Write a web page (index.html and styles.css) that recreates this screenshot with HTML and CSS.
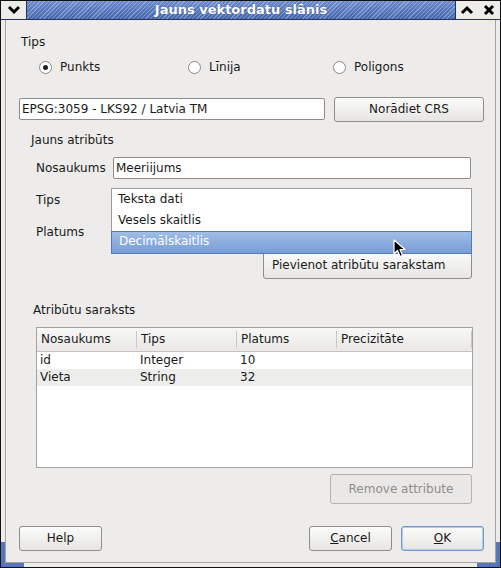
FILE: index.html
```html
<!DOCTYPE html>
<html lang="lv">
<head>
    <meta charset="UTF-8">
    <title>Jauns vektordatu slānis</title>
    <link rel="stylesheet" href="styles.css">
</head>
<body>
    <div class="window">
        <div class="titlebar">
            <div class="tb-btn tb-menu">
                <svg width="14" height="10" viewBox="0 0 14 10"><path d="M2 2 L7 7 L12 2" fill="none" stroke="#000" stroke-width="3"/></svg>
            </div>
            <div class="tb-title">Jauns vektordatu slānis</div>
            <div class="tb-btn tb-max">
                <svg width="14" height="10" viewBox="0 0 14 10"><path d="M2 8 L7 3 L12 8" fill="none" stroke="#000" stroke-width="3"/></svg>
            </div>
            <div class="tb-btn tb-close">
                <svg width="12" height="12" viewBox="0 0 12 12"><path d="M2 2 L10 10 M10 2 L2 10" fill="none" stroke="#000" stroke-width="3"/></svg>
            </div>
        </div>

        <div class="client">
            <div class="group-title">Tips</div>
            <div class="radio-row">
                <label class="radio"><span class="dot checked"></span>Punkts</label>
                <label class="radio"><span class="dot"></span>Līnija</label>
                <label class="radio"><span class="dot"></span>Poligons</label>
            </div>

            <div class="crs-row">
                <div class="field crs-field">EPSG:3059 - LKS92 / Latvia TM</div>
                <div class="button crs-btn">Norādiet CRS</div>
            </div>

            <div class="group-title attr-title">Jauns atribūts</div>
            <div class="form-row">
                <span class="form-label">Nosaukums</span>
                <div class="field name-field">Meeriijums</div>
            </div>
            <div class="form-row plain">
                <span class="form-label">Tips</span>
            </div>
            <div class="form-row plain">
                <span class="form-label">Platums</span>
            </div>
            <div class="add-row">
                <div class="button add-btn">Pievienot atribūtu sarakstam</div>
            </div>

            <!-- open combo box list -->
            <ul class="popup">
                <li>Teksta dati</li>
                <li>Vesels skaitlis</li>
                <li class="selected">Decimālskaitlis</li>
            </ul>
            <svg class="cursor" width="14" height="20" viewBox="0 0 14 20">
                <path d="M1 1 L1 15 L4.5 11.5 L7 17.5 L9.5 16.5 L7 10.5 L12 10.5 Z" fill="#000" stroke="#fff" stroke-width="1.2" stroke-linejoin="round"/>
            </svg>

            <div class="group-title list-title">Atribūtu saraksts</div>
            <div class="table">
                <div class="thead">
                    <span>Nosaukums</span>
                    <span>Tips</span>
                    <span>Platums</span>
                    <span>Precizitāte</span>
                </div>
                <div class="trow">
                    <span>id</span><span>Integer</span><span>10</span><span></span>
                </div>
                <div class="trow alt">
                    <span>Vieta</span><span>String</span><span>32</span><span></span>
                </div>
            </div>

            <div class="remove-row">
                <div class="button disabled remove-btn">Remove attribute</div>
            </div>

            <div class="footer">
                <div class="button">Help</div>
                <div class="spacer"></div>
                <div class="button"><u>C</u>ancel</div>
                <div class="button default"><u>O</u>K</div>
            </div>
        </div>
    </div>
</body>
</html>
```

FILE: styles.css
```css
body {
    margin: 0;
    font-family: "DejaVu Sans", sans-serif;
    font-size: 12px;
    color: #1a1a1a;
    background: #edeceb;
}
.window {
    width: 501px;
    height: 568px;
    box-sizing: border-box;
    border: 1px solid #111;
    background: #edeceb;
    position: relative;
    display: flex;
    flex-direction: column;
}
/* resize grips in the lower corners */
.window::before, .window::after {
    content: "";
    position: absolute;
    bottom: 0;
    width: 19px;
    height: 21px;
    border-bottom: 4px solid #5575bd;
}
.window::before {
    left: 0;
    border-left: 4px solid #5575bd;
}
.window::after {
    right: 0;
    border-right: 4px solid #5575bd;
}

/* title bar */
.titlebar {
    height: 18px;
    display: flex;
    border-bottom: 1px solid #23335f;
}
.tb-btn {
    background: #edeceb;
    display: flex;
    align-items: center;
    justify-content: center;
}
.tb-menu {
    width: 25px;
    border-right: 1px solid #23335f;
}
.tb-max {
    width: 22px;
    border-left: 1px solid #23335f;
}
.tb-close {
    width: 22px;
}
.tb-title {
    flex: 1;
    text-align: center;
    color: #fff;
    font-weight: bold;
    font-size: 13px;
    line-height: 18px;
    text-shadow: 0 0 1px #2b3f78;
    background:
        repeating-linear-gradient(135deg, rgba(255,255,255,0.28) 0 1px, transparent 1px 3px),
        linear-gradient(#6c8bcd, #4566ad);
}

/* window contents */
.client {
    flex: 1;
    margin: 0 4px 4px;
    border: 1px solid #a3a2a0;
    border-top: none;
    padding-left: 13px;
    position: relative;
}
.group-title {
    margin-top: 15px;
    padding-left: 2px;
    line-height: 15px;
}
.radio-row {
    margin-top: 9px;
    padding-left: 20px;
    display: grid;
    grid-template-columns: 149px 145px auto;
    height: 16px;
    align-items: center;
}
.radio {
    display: flex;
    align-items: center;
    gap: 8px;
}
.dot {
    width: 11px;
    height: 11px;
    border: 1px solid #8a8987;
    border-radius: 50%;
    background: #fff;
    position: relative;
}
.dot.checked::after {
    content: "";
    position: absolute;
    left: 3px;
    top: 3px;
    width: 5px;
    height: 5px;
    border-radius: 50%;
    background: #222;
}
.crs-row {
    margin-top: 22px;
    display: flex;
    align-items: center;
    gap: 9px;
    height: 24px;
}
.field {
    box-sizing: border-box;
    height: 22px;
    line-height: 20px;
    padding: 0 2px;
    background: #fff;
    border: 1px solid #8e8d8b;
    border-radius: 2px;
}
.crs-field {
    width: 306px;
}
.button {
    box-sizing: border-box;
    height: 25px;
    line-height: 23px;
    text-align: center;
    border: 1px solid #8e8d8b;
    border-radius: 3px;
    background: linear-gradient(#fbfbfa, #e6e5e3);
}
.crs-btn {
    width: 150px;
}
.attr-title {
    margin-top: 12px;
    padding-left: 12px;
}
.form-row {
    margin-top: 9px;
    padding-left: 17px;
    display: flex;
    align-items: center;
    height: 22px;
}
.form-row.plain {
    margin-top: 10px;
}
.form-label {
    width: 77px;
}
.name-field {
    width: 358px;
}
.add-row {
    margin-top: 8px;
    padding-left: 244px;
}
.add-btn {
    width: 209px;
    height: 28px;
    line-height: 26px;
    text-align: left;
    padding-left: 8px;
}
.popup {
    position: absolute;
    left: 105px;
    top: 168px;
    width: 361px;
    height: 65px;
    box-sizing: border-box;
    margin: 0;
    padding: 0;
    list-style: none;
    background: #fff;
    border: 1px solid #9d9c9a;
}
.popup li {
    height: 21px;
    line-height: 21px;
    padding-left: 6px;
}
.popup li.selected {
    height: 21px;
    line-height: 19px;
    margin: 0 -1px;
    padding-left: 7px;
    color: #fff;
    border: 1px solid #5879b9;
    background: linear-gradient(#a0bde6, #779cd6);
}
.cursor {
    position: absolute;
    left: 387px;
    top: 219px;
}
.list-title {
    margin-top: 24px;
    padding-left: 14px;
}
.table {
    margin-top: 9px;
    margin-left: 17px;
    width: 437px;
    height: 141px;
    box-sizing: border-box;
    border: 1px solid #a3a2a0;
    background: #fff;
}
.thead, .trow {
    display: grid;
    grid-template-columns: 100px 100px 100px 1fr;
}
.thead {
    height: 23px;
    line-height: 23px;
    background: linear-gradient(#f7f7f6, #e9e8e6);
    border-bottom: 1px solid #c4c3c1;
}
.thead span {
    padding-left: 4px;
    border-right: 1px solid #c9c8c6;
    margin: 3px 0;
    line-height: 17px;
}
.trow {
    height: 17px;
    line-height: 17px;
}
.trow span {
    padding-left: 3px;
}
.trow.alt {
    background: #ededec;
}
.remove-row {
    margin-top: 6px;
    padding-left: 311px;
}
.remove-btn {
    width: 142px;
    height: 30px;
    line-height: 28px;
}
.button.disabled {
    color: #8f8e8c;
    border-color: #b3b2b0;
    background: #e9e8e6;
}
.footer {
    margin-top: 22px;
    display: flex;
    gap: 9px;
    padding-right: 11px;
}
.footer .button {
    width: 83px;
}
.footer .spacer {
    flex: 1;
}
.button.default {
    border-color: #7a98c9;
    box-shadow: inset 0 0 0 1px #b7c9e6;
}
```
